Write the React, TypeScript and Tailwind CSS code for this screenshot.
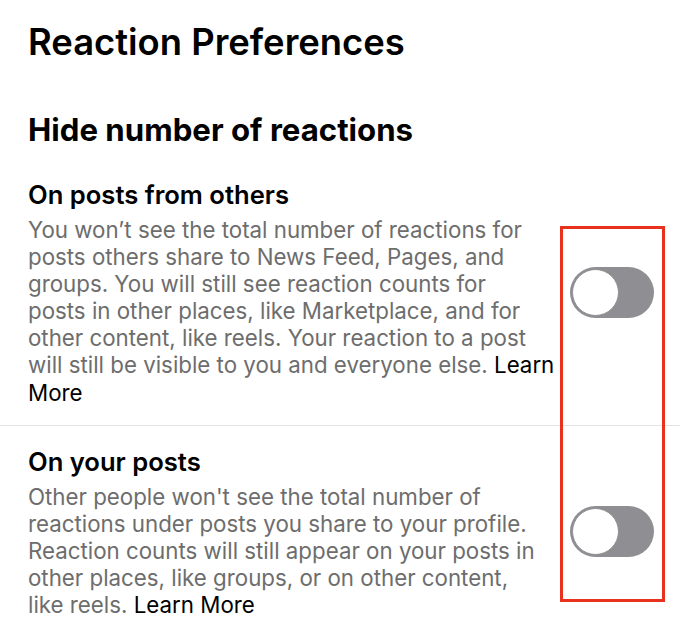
import React from "react";

function Toggle() {
  return (
    <div className="flex h-[51px] w-[84px] shrink-0 items-center rounded-full bg-[#8e8e93] p-[2px]">
      <div className="h-[47px] w-[47px] rounded-full border border-[#8e8e93] bg-white" />
    </div>
  );
}

function Row({ title, lines }: { title: string; lines: React.ReactNode[] }) {
  return (
    <div className="flex items-center">
      <div className="w-[535px] shrink-0">
        <h3 className="text-[25.6px] font-semibold leading-[32px] text-black">{title}</h3>
        <p className="mt-[5px] text-[22.3px] leading-[27.1px] text-[#6d6d6d]">
          {lines.map((l, i) => (
            <span key={i} className="block whitespace-nowrap">
              {l}
            </span>
          ))}
        </p>
      </div>
      <div className="ml-[7px]">
        <Toggle />
      </div>
    </div>
  );
}

const learn = <span className="text-black">Learn</span>;

export default function App() {
  return (
    <main
      className="relative h-[635px] w-[680px] overflow-hidden bg-white"
      style={{ fontFamily: "Inter, 'Noto Sans', sans-serif" }}
    >
      <div className="pl-[28px] pt-[20px]">
        <h1 className="text-[36.4px] font-semibold leading-[44px] text-black">Reaction Preferences</h1>
        <h2 className="mt-[47px] text-[31.2px] font-bold leading-[38px] text-black">
          Hide number of reactions
        </h2>
      </div>

      <div className="pl-[28px] pt-[30px] pb-[19px]">
        <Row
          title="On posts from others"
          lines={[
            "You won’t see the total number of reactions for",
            "posts others share to News Feed, Pages, and",
            "groups. You will still see reaction counts for",
            "posts in other places, like Marketplace, and for",
            "other content, like reels. Your reaction to a post",
            <>will still be visible to you and everyone else. {learn}</>,
            <span className="text-black">More</span>,
          ]}
        />
      </div>

      <div className="h-px bg-[#e3e3e3]" />

      <div className="pl-[28px] pt-[20px]">
        <Row
          title="On your posts"
          lines={[
            "Other people won't see the total number of",
            "reactions under posts you share to your profile.",
            "Reaction counts will still appear on your posts in",
            "other places, like groups, or on other content,",
            <>like reels. <span className="text-black">Learn More</span></>,
          ]}
        />
      </div>

      <div className="absolute left-[560px] top-[226px] h-[376px] w-[105px] border-[3px] border-[#e8321e]" />
    </main>
  );
}
